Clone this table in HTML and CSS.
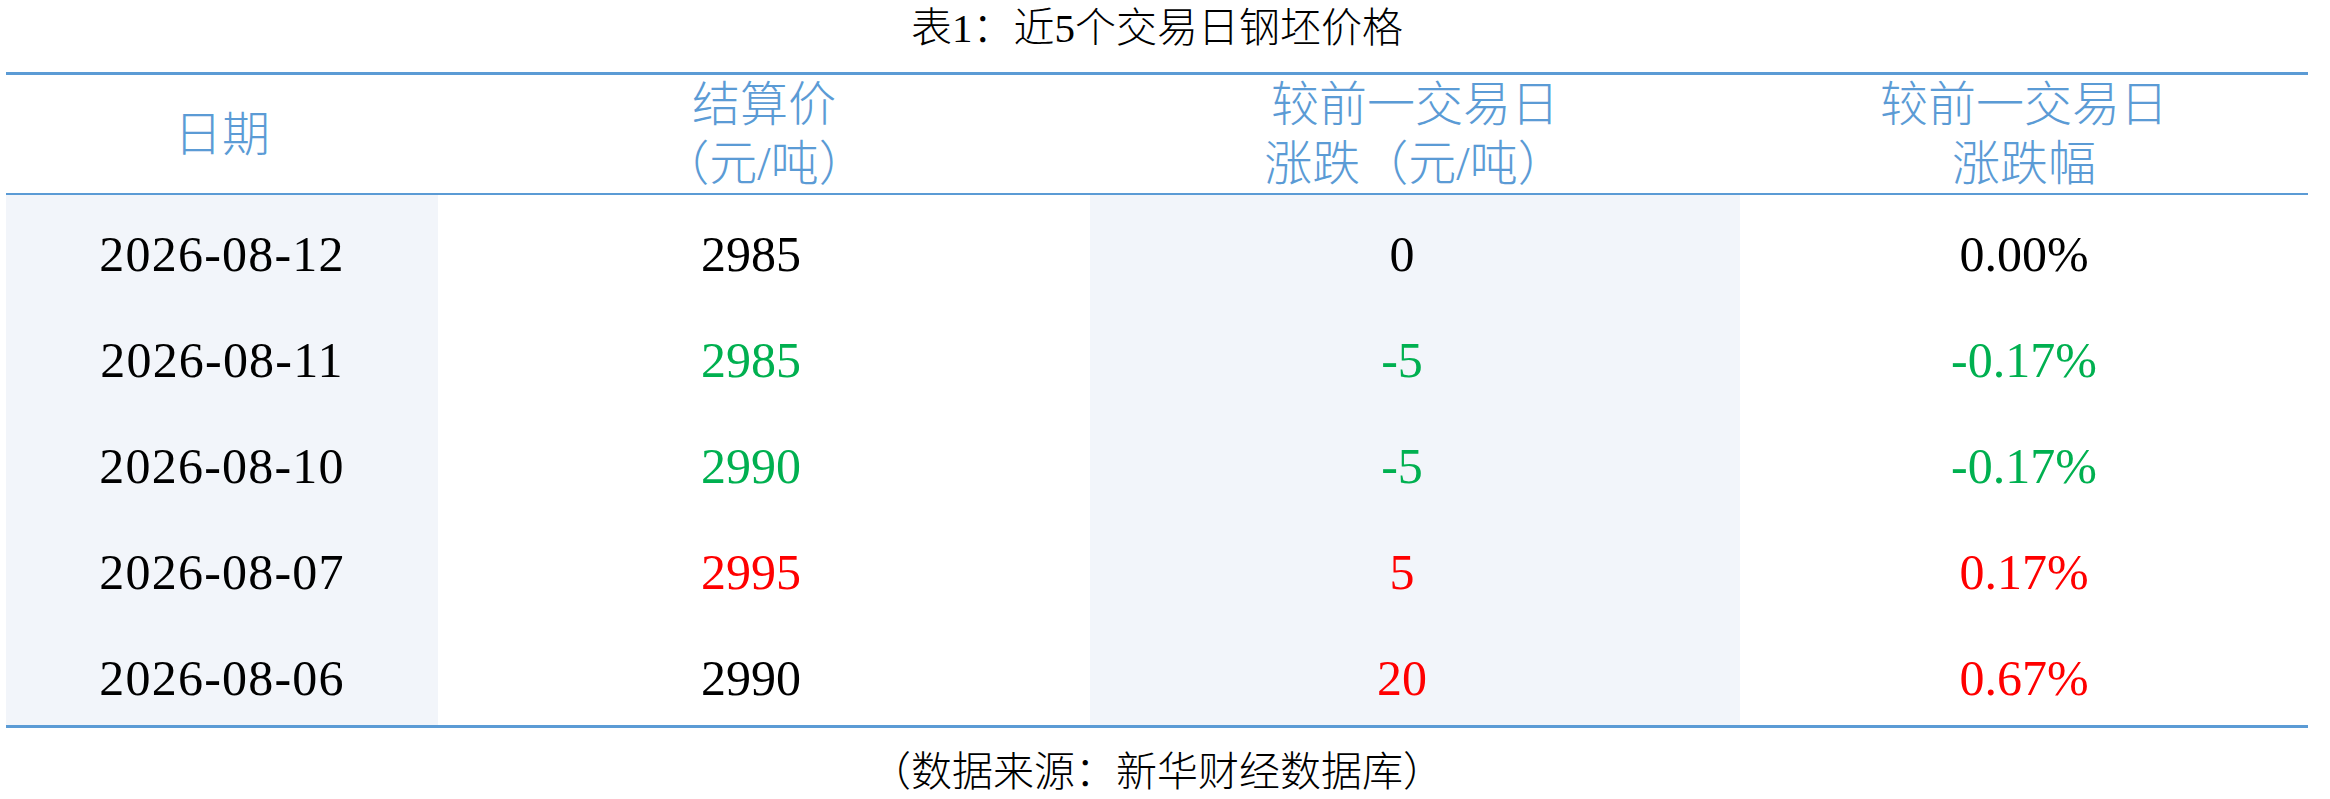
FILE: index.html
```html
<!DOCTYPE html>
<html lang="zh-CN">
<head>
<meta charset="utf-8">
<title>表1：近5个交易日钢坯价格</title>
<link rel="stylesheet" href="styles.css">
</head>
<body>
<div class="page">
  <div class="title">表1：近5个交易日钢坯价格</div>
  <div class="frame">
    <table class="prices">
      <colgroup>
        <col class="c1"><col class="c2"><col class="c3"><col class="c4">
      </colgroup>
      <thead>
        <tr>
          <th>日期</th>
          <th>结算价<br>（元/吨）</th>
          <th>较前一交易日<br>涨跌（元/吨）</th>
          <th>较前一交易日<br>涨跌幅</th>
        </tr>
      </thead>
      <tbody>
        <tr>
          <td class="date shade">2026-08-12</td>
          <td class="mid">2985</td>
          <td class="mid shade">0</td>
          <td>0.00%</td>
        </tr>
        <tr>
          <td class="date shade">2026-08-11</td>
          <td class="mid down">2985</td>
          <td class="mid shade down">-5</td>
          <td class="down">-0.17%</td>
        </tr>
        <tr>
          <td class="date shade">2026-08-10</td>
          <td class="mid down">2990</td>
          <td class="mid shade down">-5</td>
          <td class="down">-0.17%</td>
        </tr>
        <tr>
          <td class="date shade">2026-08-07</td>
          <td class="mid up">2995</td>
          <td class="mid shade up">5</td>
          <td class="up">0.17%</td>
        </tr>
        <tr>
          <td class="date shade">2026-08-06</td>
          <td class="mid">2990</td>
          <td class="mid shade up">20</td>
          <td class="up">0.67%</td>
        </tr>
      </tbody>
    </table>
  </div>
  <div class="source">（数据来源：新华财经数据库）</div>
</div>
</body>
</html>
```

FILE: styles.css
```css
html, body {
  margin: 0;
  padding: 0;
  background: #ffffff;
}

.page {
  width: 2302px;
  margin-left: 6px;
  font-family: "Liberation Serif", "Noto Sans CJK SC", serif;
  color: #000000;
}

.title {
  font-size: 41px;
  font-weight: 300;
  line-height: 56px;
  height: 56px;
  padding-bottom: 16px;
  text-align: center;
  white-space: nowrap;
}

.frame {
  border-top: 3px solid #5b9bd5;
  border-bottom: 3px solid #5b9bd5;
}

.prices {
  width: 2302px;
  table-layout: fixed;
  border-collapse: separate;
  border-spacing: 0;
}

.c1 { width: 432px; }
.c2 { width: 652px; }
.c3 { width: 650px; }
.c4 { width: 568px; }

.prices th {
  height: 118px;
  padding: 0;
  border-bottom: 2px solid #5b9bd5;
  font-family: "Liberation Serif", "Noto Sans CJK SC", sans-serif;
  font-weight: 300;
  font-size: 48px;
  line-height: 59px;
  color: #5b9bd5;
  text-align: center;
  vertical-align: middle;
  white-space: nowrap;
}

.prices td {
  height: 94px;
  padding: 12px 0 0 0;
  font-size: 50px;
  line-height: 60px;
  text-align: center;
  vertical-align: middle;
  white-space: nowrap;
}

.prices td.shade {
  background: #f2f5fa;
}

.prices td.mid {
  padding-right: 26px;
}

.prices td.date {
  letter-spacing: 1.2px;
}

.down { color: #00b050; }
.up { color: #ff0000; }

.source {
  margin-top: 16px;
  font-size: 41px;
  font-weight: 300;
  line-height: 56px;
  text-align: center;
  white-space: nowrap;
}
```
